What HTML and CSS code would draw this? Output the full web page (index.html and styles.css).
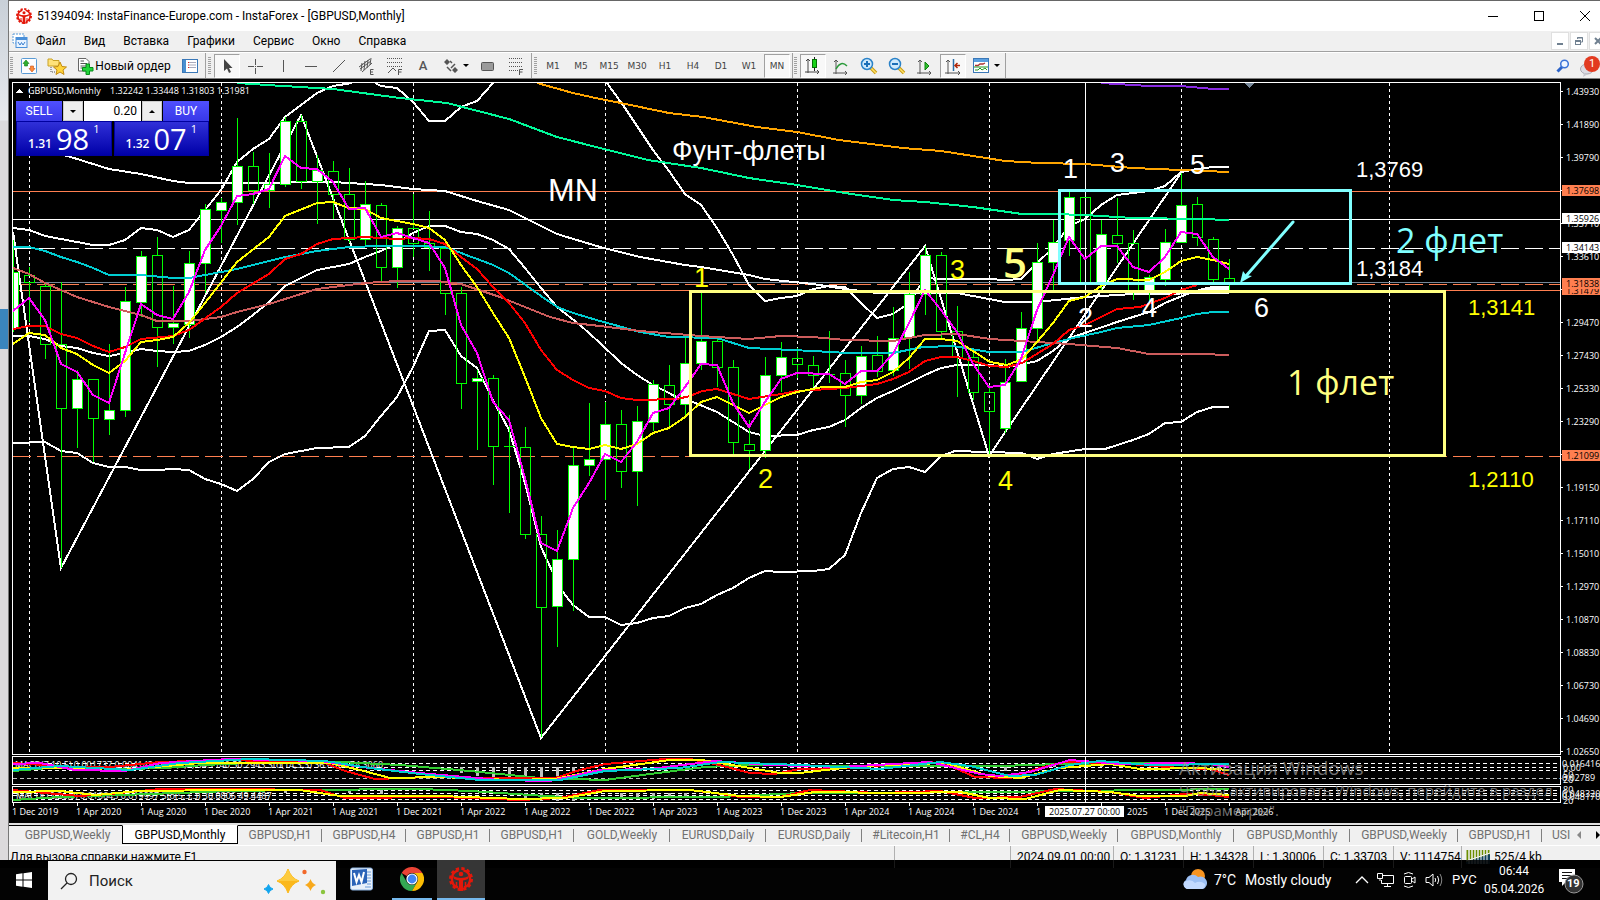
FILE: index.html
```html
<!DOCTYPE html>
<html lang="ru">
<head>
<meta charset="utf-8">
<title>51394094: InstaFinance-Europe.com - InstaForex - [GBPUSD,Monthly]</title>
<link rel="stylesheet" href="styles.css">
</head>
<body>
<svg class="defs" aria-hidden="true">
  <symbol id="insta" viewBox="0 0 24 24">
    <circle cx="12" cy="12" r="10.5" fill="none" stroke="#e3170a" stroke-width="3" stroke-dasharray="3.2 2.3"/>
    <path d="M9.500 3.300A9 9 0 0 0 9 20.500M14.500 3.300A9 9 0 0 1 15 20.500" fill="none" stroke="#e3170a" stroke-width="2.400"/>
    <circle cx="12" cy="7" r="2.300" fill="#e3170a"/>
    <path d="M4 9Q8 11 12 11Q16 11 20 9L19 12Q16 13 14 13.500V24H10V13.500Q8 13 5 12Z" fill="#e3170a"/>
    <path d="M7.500 15V20M16.500 15V20" stroke="#e3170a" stroke-width="1.500"/>
  </symbol>
</svg>
<div class="screen">
  <div class="workspace">
    <div class="behind"><div class="behind-mark"></div></div>
    <main class="window">
      <header class="titlebar">
        <svg class="logo" viewBox="0 0 24 24"><use href="#insta"/></svg>
        <h1>51394094: InstaFinance-Europe.com - InstaForex - [GBPUSD,Monthly]</h1>
        <div class="winbtns">
          <button aria-label="Свернуть"><svg width="12" height="12" viewBox="0 0 12 12"><path d="M1 6.500H11" stroke="#000"/></svg></button>
          <button aria-label="Развернуть"><svg width="12" height="12" viewBox="0 0 12 12"><rect x="1.500" y="1.500" width="9" height="9" fill="none" stroke="#000"/></svg></button>
          <button aria-label="Закрыть"><svg width="12" height="12" viewBox="0 0 12 12"><path d="M1 1L11 11M11 1L1 11" stroke="#000"/></svg></button>
        </div>
      </header>
      <nav class="menubar">
        <svg class="menuicon" width="16" height="16" viewBox="0 0 16 16"><rect x="1" y="1" width="11" height="9" fill="#fff" stroke="#5b9bd8" stroke-dasharray="2 1"/><rect x="4" y="4.500" width="11" height="10" fill="#e8f3ff" stroke="#4a90d9"/><path d="M4 6H15" stroke="#4a90d9" stroke-width="2"/><path d="M6 9L8 12L9.500 9.500L11 12L13 9" fill="none" stroke="#3a7fd0"/></svg>
        <button>Файл</button><button>Вид</button><button>Вставка</button><button>Графики</button><button>Сервис</button><button>Окно</button><button>Справка</button>
        <div class="mdi">
          <button aria-label="Свернуть график"><svg width="10" height="10" viewBox="0 0 10 10"><path d="M2 8H8" stroke="#708090" stroke-width="2"/></svg></button>
          <button aria-label="Восстановить график"><svg width="10" height="10" viewBox="0 0 10 10"><path d="M3.500 3V1.500H8.500V6H7M3 2H9" fill="none" stroke="#708090"/><rect x="1.500" y="4.500" width="5" height="4" fill="none" stroke="#708090"/><path d="M1 5H7" stroke="#708090" stroke-width="2"/></svg></button>
          <button aria-label="Закрыть график"><svg width="10" height="10" viewBox="0 0 10 10"><path d="M2 2L8 8M8 2L2 8" stroke="#708090" stroke-width="2"/></svg></button>
        </div>
      </nav>
      <div class="toolbar">
        <div class="group">
          <span class="grip"></span>
          <button aria-label="Обзор рынка"><svg width="18" height="18" viewBox="0 0 18 18"><rect x="1.500" y="1.500" width="15" height="15" rx="1" fill="#fdfdff" stroke="#5a9bd5"/><path d="M6 3L9 6.500H7.500V9H4.500V6.500H3Z" fill="#2eaf2e" stroke="#137a13" stroke-width=".6"/><path d="M12 15L9 11.500H10.500V9H13.500V11.500H15Z" fill="#ff8c3a" stroke="#c8501a" stroke-width=".6"/></svg></button>
          <button aria-label="Навигатор"><svg width="20" height="18" viewBox="0 0 20 18"><path d="M1 2H5L6 3.500H12V9H1Z" fill="#ffe27a" stroke="#c9a227"/><path d="M4 10V15H8" fill="none" stroke="#555" stroke-dasharray="1 1"/><path d="M13 5L15 9.500L19.500 10L16 13L17 17.500L13 15L9 17.500L10 13L6.500 10L11 9.500Z" fill="#ffd43b" stroke="#c28a10"/></svg></button>
          <button class="wide"><svg width="18" height="18" viewBox="0 0 18 18"><path d="M2.500 1.500H10L13 4.500V14H2.500Z" fill="#fff" stroke="#666"/><path d="M4.500 4H8M4.500 6.500H11M4.500 9H10M4.500 11H8" stroke="#555"/><path d="M10 7H13.500V10.500H17V14H13.500V17.500H10V14H6.500V10.500H10Z" fill="#22d33a" stroke="#078a1a"/></svg>Новый ордер</button>
          <button aria-label="Терминал"><svg width="18" height="18" viewBox="0 0 18 18"><rect x="1.500" y="2.500" width="15" height="13" fill="#fff" stroke="#3a78b8"/><rect x="2" y="3" width="3" height="12" fill="#4a8fd0"/><path d="M8 5.500H15M8 8H15M8 10.500H15" stroke="#aab"/><path d="M7 5.500H8M7 8H8M7 10.500H8" stroke="#d22"/></svg></button>
        </div>
        <div class="group tools">
          <span class="grip"></span>
          <button class="on" aria-label="Курсор"><svg width="18" height="18" viewBox="0 0 18 18"><path d="M6 2V14L9 11.500L11 16L13 15L11 11H14.500Z" fill="#444"/></svg></button>
          <button aria-label="Перекрестие"><svg width="18" height="18" viewBox="0 0 18 18"><path d="M9.500 2V8M9.500 11V17M2 9.500H8M11 9.500H17M9 9.500H10" stroke="#555"/></svg></button>
          <button aria-label="Вертикальная линия"><svg width="18" height="18" viewBox="0 0 18 18"><path d="M9.500 3V15" stroke="#555"/></svg></button>
          <button aria-label="Горизонтальная линия"><svg width="18" height="18" viewBox="0 0 18 18"><path d="M3 9.500H15" stroke="#555"/></svg></button>
          <button aria-label="Трендовая линия"><svg width="18" height="18" viewBox="0 0 18 18"><path d="M3 15L15 3" stroke="#555"/></svg></button>
          <button aria-label="Канал"><svg width="18" height="18" viewBox="0 0 18 18"><path d="M1 10L12 2M4 15L14 6M4 6L3 14M7 4L6 13M10 3L9 11M13 1L12 8M2 12L13 4" fill="none" stroke="#555"/><path d="M15.500 12.500H12.500V17.500H15.500M12.500 15H15" fill="none" stroke="#555"/></svg></button>
          <button aria-label="Фибоначчи"><svg width="18" height="18" viewBox="0 0 18 18"><path d="M1 1.500H17M1 5.500H17M1 9.500H17" stroke="#555" stroke-dasharray="1 1"/><path d="M2 16L7 11L10 14M12.500 18V12.500H16M12.500 15H15.500" fill="none" stroke="#555"/></svg></button>
          <button class="letter" aria-label="Текст">A</button>
          <button class="drop" aria-label="Стрелки"><svg width="16" height="16" viewBox="0 0 16 16"><path d="M1 4L4 1L7 4L4 7ZM9 12L12 9L15 12L12 15Z" fill="#555"/><path d="M7 3L9 5M12 6L8 10M4 9L8 13" stroke="#555" stroke-width="1.500"/></svg><i class="caret"></i></button>
          <button aria-label="Прямоугольник"><svg width="18" height="18" viewBox="0 0 18 18"><rect x="2.500" y="5.500" width="12" height="8" rx="1" fill="#9a9a9a" stroke="#555"/></svg></button>
          <button aria-label="Уровни"><svg width="18" height="18" viewBox="0 0 18 18"><path d="M2 1.500H16M2 5.500H16M2 9.500H16M2 13.500H11" stroke="#555" stroke-dasharray="1 1"/><path d="M12.500 18V12.500H16M12.500 15H15.500" fill="none" stroke="#555"/></svg></button>
        </div>
        <div class="group frames">
          <span class="grip"></span>
          <button>M1</button><button>M5</button><button>M15</button><button>M30</button><button>H1</button><button>H4</button><button>D1</button><button>W1</button><button class="on">MN</button>
        </div>
        <div class="group">
          <span class="grip"></span>
          <button class="on" aria-label="Свечи"><svg width="18" height="18" viewBox="0 0 18 18"><path d="M4 2V16M1 15H15M2 4L4 2L6 4M13 13L15 15L13 17" fill="none" stroke="#444"/><path d="M10.500 0V14" stroke="#222"/><rect x="8.500" y="2.500" width="4" height="8" fill="#19d219" stroke="#067006"/></svg></button>
          <button aria-label="Линия"><svg width="18" height="18" viewBox="0 0 18 18"><path d="M4 3V17M1 16H15M2 5L4 3L6 5M13 14L15 16L13 18" fill="none" stroke="#555"/><path d="M4 12Q9 3 15 9" fill="none" stroke="#2a9a3a" stroke-width="1.500"/></svg></button>
          <button aria-label="Увеличить"><svg width="18" height="18" viewBox="0 0 18 18"><path d="M11 11L16 16" stroke="#c79a10" stroke-width="3.500"/><path d="M11 11L16 16" stroke="#ffe066" stroke-width="1.500"/><circle cx="7" cy="7" r="5.500" fill="#cfe9fb" stroke="#2a82c8" stroke-width="1.500"/><path d="M7 4V10M4 7H10" stroke="#1a6fb8" stroke-width="2"/></svg></button>
          <button aria-label="Уменьшить"><svg width="18" height="18" viewBox="0 0 18 18"><path d="M11 11L16 16" stroke="#c79a10" stroke-width="3.500"/><path d="M11 11L16 16" stroke="#ffe066" stroke-width="1.500"/><circle cx="7" cy="7" r="5.500" fill="#cfe9fb" stroke="#2a82c8" stroke-width="1.500"/><path d="M4 7H10" stroke="#1a6fb8" stroke-width="2"/></svg></button>
          <button aria-label="Автопрокрутка"><svg width="18" height="18" viewBox="0 0 18 18"><path d="M4 3V17M1 16H15M2 5L4 3L6 5M13 14L15 16L13 18" fill="none" stroke="#555"/><path d="M9 5L13 9L9 13Z" fill="#2fc02f" stroke="#0a800a"/></svg></button>
          <button class="on" aria-label="Сдвиг"><svg width="18" height="18" viewBox="0 0 18 18"><path d="M4 3V17M1 16H16M2 5L4 3L6 5M14 14L16 16L14 18" fill="none" stroke="#555"/><path d="M9.500 2V14" stroke="#2a6fa8" stroke-width="1.500"/><path d="M16 8.500H11M13.500 6L11 8.500L13.500 11" fill="none" stroke="#b0280a" stroke-width="1.500"/></svg></button>
          <button class="drop" aria-label="Шаблоны"><svg width="18" height="18" viewBox="0 0 18 18"><rect x="1.500" y="1.500" width="15" height="14" fill="#fff" stroke="#3a78b8"/><rect x="2" y="2" width="14" height="3" fill="#5a9fe0"/><path d="M3 8.500H6L8 7H11L13 6" fill="none" stroke="#a33" stroke-width="1.300"/><path d="M3 13H6L8 11L10 13L13 11L15 13M2 10H16" fill="none" stroke="#292" /></svg><i class="caret"></i></button>
        </div>
        <div class="toolend">
          <button aria-label="Поиск"><svg width="14" height="14" viewBox="0 0 14 14"><path d="M6 8L1.500 12.500" stroke="#2a62c8" stroke-width="3"/><circle cx="8.500" cy="5" r="3.800" fill="#eef5ff" stroke="#3a72d8" stroke-width="1.500"/></svg></button>
          <button class="chat" aria-label="Сообщения"><svg width="20" height="22" viewBox="0 0 20 22"><ellipse cx="7" cy="14" rx="6.500" ry="5" fill="#dcdce4" stroke="#a8a8b0"/><path d="M4 18L3 22L8 19Z" fill="#c8c8d0"/><circle cx="12" cy="9" r="8" fill="#e23a20"/></svg><span class="count">1</span></button>
        </div>
      </div>
      <section class="chart">
        <svg class="plot" viewBox="9 80 1591 743" preserveAspectRatio="xMinYMin meet" role="img" aria-label="GBPUSD,Monthly">
          <g class="crisp">
            <path class="grid" d="M29.500 83V754M221.500 83V754M413.500 83V754M605.500 83V754M797.500 83V754M989.500 83V754M1181.500 83V754M1389.500 83V754"/>
            <path class="white1" d="M13 219.500H1560M1085.500 83V754"/>
            <path class="white1 dash" d="M13 248.500H1560"/>
            <path class="coral" d="M13 191.500H1560M13 290.500H1560"/>
            <path class="coral dash" d="M13 284.500H1560M13 456.500H1560"/>
            <path d="M13 282.500H1560" stroke="#778899"/>
            <g class="line white">
              <path d="M13 228L29 230L45 236L61 239L77 242L93 245H109L125 240L141 228L157 230L173 237L189 230L205 210L221 190L237 162L253 149L269 139L285 117L301 105L317 93L333 86L352 83M375 83L381 86L397 88L413 102L429 121H445L461 107L477 101L493 83M607 83L623 105L653 150L669 171L685 194L701 205L717 228L733 255L749 285L765 301L781 298L797 296L813 289L829 286L845 287L861 303L877 318L893 314L909 303L925 278L941 279H989L1005 280L1021 279L1037 263L1053 248L1069 226L1085 219L1101 205L1117 195L1133 193L1149 191L1165 186L1181 172L1197 169L1213 167H1229"/>
              <path d="M13 336H29L45 339L61 346L77 348L93 353L109 356L125 353L141 349L157 351L173 352L189 351L205 345L221 337L237 327L253 315L269 302L285 286L301 278L317 270L333 267L349 264L365 257L381 251L397 243L413 233L429 226H445L461 232L477 234L493 240L509 249L525 268L541 288L557 307L580 325L600 343L621 363L637 375L653 385L669 393L678 398L693 402L717 412L733 422L749 432L765 436L797 435L813 430L829 427L845 420L861 408L877 398L893 391L909 383L925 375L941 368L957 365H989L1007 367L1023 364L1037 361L1053 351L1069 338L1085 333L1117 322L1149 312L1165 303L1187 294L1203 289L1213 287H1229M1205 289H1229"/>
              <path d="M13 443L45 442L61 451L77 453L93 463L109 467H125L141 470H157L173 469L189 470L205 479L221 484L237 491L253 479L269 462L285 454L317 448L349 447L365 436L381 416L397 397L413 367L429 331L445 330L461 356L477 368L493 400L509 430L525 483L541 547L553 573L563 592L573 605L589 617H605L621 625L637 623L653 618L669 616L685 608L701 604L717 595L733 588L749 578L765 571L781 572L813 571L829 569L845 555L861 513L877 478L893 469L909 467L925 472L941 456L955 451L987 452L1022 453L1037 459L1053 454L1085 449H1105L1133 440L1149 434L1165 423L1181 422L1197 412L1213 407H1229"/>
              <path d="M60 154L74 158L109 169L141 174L173 181L189 183H269L301 182H333L381 185L413 189L445 191L477 201L509 210L557 234L600 247L640 257L685 265L701 267L749 275L765 279L813 284L845 289L877 293H957L1005 302H1037L1085 297L1133 294L1229 293"/>
            </g>
            <path class="zigzag" d="M13 232L61 568L301 115L541 738L925 246L989 456L1181 173"/>
            <path class="candle" d="M13.500 240V332M29.500 267V275M29.500 282V322M45.500 284V286M45.500 344V359M61.500 282V344M61.500 408V568M77.500 370V448M93.500 418V462M109.500 344V435M125.500 287V417M141.500 251V317M157.500 237V255M157.500 327V367M173.500 286V344M189.500 251V338M205.500 204V293M221.500 198V243M237.500 118V225M253.500 152V166M253.500 190V204M269.500 153V208M285.500 117V187M301.500 115V121M301.500 181V189M317.500 155V224M333.500 161V171M333.500 194V219M349.500 168V194M349.500 239V243M365.500 181V247M381.500 203V205M381.500 267V282M397.500 226V288M413.500 194V228M413.500 243V257M429.500 211V243M429.500 247V271M445.500 293V315M461.500 287V293M461.500 383V409M477.500 370V450M493.500 375V378M493.500 446V485M509.500 415V513M504 446.500H515M525.500 427V447M525.500 534V539M541.500 516V534M541.500 607V737M557.500 530V647M573.500 448V611M589.500 403V476M605.500 402V500M621.500 410V424M621.500 471V488M637.500 406V506M653.500 380V431M669.500 365V385M669.500 404V426M685.500 338V415M701.500 293V370M717.500 337V341M717.500 367V387M733.500 360V367M733.500 442V455M749.500 420V444M749.500 450V469M765.500 357V458M781.500 342V392M797.500 348V358M797.500 364V378M813.500 356V365M813.500 375V387M829.500 331V383M824 374.500H835M845.500 360V373M845.500 395V427M861.500 346V404M877.500 336V355M877.500 371V377M893.500 307V376M909.500 272V369M925.500 246V315M941.500 252V255M941.500 331V338M957.500 306V331M957.500 357V397M973.500 348V357M973.500 392V400M989.500 385V392M989.500 411V456M1005.500 359V433M1021.500 312V381M1037.500 243V343M1053.500 220V290M1069.500 192V256M1101.500 220V292M1117.500 198V235M1117.500 243V263M1133.500 230V243M1133.500 290V300M1149.500 275V302M1165.500 229V286M1181.500 173V242M1197.500 197V204M1197.500 237V246M1213.500 237V239M1213.500 279V283M1229.500 259V278M1229.500 283V290"/>
            <path class="candle" d="M24.500 275.500h10v7h-10zM40.500 286.500h10v58h-10zM56.500 344.500h10v64h-10zM88.500 379.500h10v39h-10zM152.500 255.500h10v72h-10zM248.500 166.500h10v24h-10zM296.500 121.500h10v60h-10zM328.500 171.500h10v23h-10zM344.500 194.500h10v45h-10zM376.500 205.500h10v62h-10zM408.500 228.500h10v15h-10zM424.500 243.500h10v4h-10zM440.500 248.500h10v45h-10zM456.500 293.500h10v90h-10zM488.500 378.500h10v68h-10zM520.500 447.500h10v87h-10zM536.500 534.500h10v73h-10zM616.500 424.500h10v47h-10zM664.500 385.500h10v19h-10zM712.500 341.500h10v26h-10zM728.500 367.500h10v75h-10zM744.500 444.500h10v6h-10zM792.500 358.500h10v6h-10zM808.500 365.500h10v10h-10zM840.500 373.500h10v22h-10zM872.500 355.500h10v16h-10zM936.500 255.500h10v76h-10zM952.500 331.500h10v26h-10zM968.500 357.500h10v35h-10zM984.500 392.500h10v19h-10zM1080.500 197.500h10v85h-10zM1112.500 235.500h10v8h-10zM1128.500 243.500h10v47h-10zM1192.500 204.500h10v33h-10zM1208.500 239.500h10v40h-10zM1224.500 278.500h10v5h-10z"/>
            <path class="candle up" d="M13.500 272.500h5v56h-5zM72.500 379.500h10v29h-10zM104.500 410.500h10v9h-10zM120.500 301.500h10v109h-10zM136.500 256.500h10v46h-10zM168.500 323.500h10v4h-10zM184.500 263.500h10v61h-10zM200.500 209.500h10v54h-10zM216.500 202.500h10v8h-10zM232.500 166.500h10v36h-10zM264.500 184.500h10v6h-10zM280.500 121.500h10v63h-10zM312.500 170.500h10v11h-10zM360.500 204.500h10v35h-10zM392.500 228.500h10v39h-10zM472.500 378.500h10v3h-10zM552.500 559.500h10v47h-10zM568.500 465.500h10v94h-10zM584.500 459.500h10v6h-10zM600.500 424.500h10v35h-10zM632.500 421.500h10v50h-10zM648.500 384.500h10v38h-10zM680.500 363.500h10v41h-10zM696.500 341.500h10v22h-10zM760.500 375.500h10v75h-10zM776.500 357.500h10v18h-10zM856.500 356.500h10v39h-10zM888.500 338.500h10v32h-10zM904.500 294.500h10v43h-10zM920.500 255.500h10v39h-10zM1000.500 382.500h10v46h-10zM1016.500 328.500h10v53h-10zM1032.500 262.500h10v66h-10zM1048.500 242.500h10v20h-10zM1064.500 197.500h10v43h-10zM1096.500 234.500h10v48h-10zM1144.500 277.500h10v13h-10zM1160.500 242.500h10v37h-10zM1176.500 205.500h10v37h-10z"/>
            <g class="line">
              <path stroke="#ffa500" d="M537 83L573 93L600 99L616 102L669 113L703 117L757 127L797 132L839 140L903 148L941 151L1005 161L1040 163L1085 164L1133 168L1181 170L1229 172"/>
              <path stroke="#00fa9a" d="M237 83L267 85L333 89L400 98L447 103L509 119L557 137L600 148L648 160L701 168L749 178L797 185L845 193L893 200L925 202L973 207L1022 214H1053L1085 215L1133 218L1200 219L1229 220"/>
              <path stroke="#8a2be2" d="M1101 83L1117 84L1149 86H1181L1213 89H1229"/>
              <path stroke="#00ced1" d="M13 247H29L45 251L61 257L77 262L93 268L109 275H141L173 278H189L205 275L237 269L269 261L285 257L317 251L349 247L381 246H413L445 247L461 253L477 259L493 265L509 273L541 296L557 307L573 313L600 321L640 332L669 337L717 338L749 348L813 351L847 353H893L923 347L953 346L989 352H1022L1053 343L1073 338L1101 332L1117 328L1149 325L1181 318L1197 314L1213 312H1229"/>
              <path stroke="#cd5c5c" d="M13 268L29 274L45 283L77 297L109 307L141 315L157 321H189L221 317L237 312L269 304L317 289L365 283L397 281H437L461 284L500 297L550 317L573 323L600 326L640 331L701 336L749 339L781 336L813 337L845 340L893 341L925 335L957 334L990 339L1053 343L1069 344L1117 348L1149 354H1200L1229 355"/>
              <path stroke="#f00" d="M13 329L29 326H45L61 334L77 338L93 346L109 352L125 347L141 339L173 336L189 330L221 307L237 293L269 274L285 259L301 254L317 244L333 239L365 237L397 239L413 238L429 239L445 244L461 257L477 269L493 287L509 303L525 323L541 350L557 370L573 380L589 388L605 391L621 398L637 400L677 399L690 396L702 391L717 389L749 399L781 394L797 391L845 388L877 384L893 379L909 372L925 361L941 357H957L973 361L990 366L1007 367L1022 363L1053 344L1069 330L1085 325L1101 317L1117 309L1140 307L1165 298L1181 290L1197 285"/>
              <path stroke="#ff0" d="M13 344L29 333L45 335L61 348L77 354L93 365L109 373L125 361L141 342L157 340L173 337L189 323L205 303L237 262L269 237L285 216L317 203L333 202L349 208L365 209L381 218L413 224L429 228L445 240L461 265L477 287L493 313L509 338L525 377L541 418L557 444L573 447L589 449L605 445L621 449L637 444L653 433L669 428L685 417L701 402L717 397L749 413L781 397L797 392L823 387H845L861 382L877 380L893 372L909 358L925 339H941L957 341L973 351L990 362L1007 365L1022 359L1037 342L1053 323L1069 301L1085 297L1101 286L1117 279L1149 280L1165 272L1181 261L1197 257L1213 260L1229 264"/>
              <path stroke="#f0f" d="M13 311L29 298L45 320L61 364L77 372L93 395L109 403L125 353L141 304L157 315L173 319L189 292L205 250L221 226L237 196L253 194L269 189L285 156L301 168L317 169L333 182L349 209L365 208L381 237L397 233L413 238L429 243L445 268L461 325L477 353L493 402L509 420L525 478L541 543L557 551L573 508L589 483L605 454L621 462L637 442L653 413L669 408L685 387L701 364L717 365L733 403L749 427L765 402L781 379L797 373L829 374L845 384L861 371H877L893 354L909 323L925 290L941 310L957 332L973 364L989 387L1005 385L1021 359L1037 310L1053 275L1069 237L1085 259L1101 246H1117L1133 267L1149 272L1165 257L1181 232L1197 234L1213 257L1229 269"/>
            </g>
            <path class="white1" stroke-dasharray="4 3" d="M13 763.500H1560M13 767.500H1560M13 770.500H1560M13 790.500H1560M13 793.500H1560M13 795.500H1560M13 799.500H1560"/>
            <path stroke="#c0c0c0" stroke-dasharray="4 3" d="M13 778.500H1560"/>
            <path stroke="#c0c0c0" stroke-width="3" d="M461 767V773M477 767V776M493 767V777M509 767V778M525 767V778M541 767V777M557 767V776M573 767V773M285 789V793M349 789V793M381 790V794M525 793V800M541 793V801M557 793V801M573 793V801M621 793V798M637 793V799M653 793V799M669 793V798M685 793V797M1005 767V771M1054 763V767M1101 762V767"/>
          </g>
          <g class="small">
            <text x="15" y="768">MACD(7,10,5) 0.001737 0.004142    Sto(8,3,3) 34.1140 50.2943    Sto(14,3,3) 36.6327 74.3060</text>
            <text x="16" y="799">MACD(12,26,9) 0.016643 0.019997  Sto(5,3,3) 30.0806 49.4487</text>
          </g>
          <g class="line crisp">
            <path stroke="#32cd32" d="M13 771L61 767L125 769L165 768L205 765L269 762H340L400 765L470 771L540 778L605 780L650 774L705 767L750 765L860 766H1000L1060 764L1140 763L1229 764"/>
            <path stroke="#f00" d="M13 763L45 765L75 767H110L160 762L230 760L325 763L345 771L375 779L430 777L500 778H555L580 770L605 764L665 759H690L715 764L750 773L774 774L800 769H830L930 762L950 766L975 777L1010 778L1040 768L1065 762L1130 764L1180 768L1210 769L1229 775"/>
            <path stroke="#ff0" d="M13 768L60 768L110 771L200 763H330L360 770L390 778L440 777L510 780L555 779L605 769L670 760H702L750 768L780 773H800L860 766L945 763L990 776L1020 778L1060 768L1110 764L1140 769L1200 768L1229 770"/>
            <path stroke="#f0f" d="M13 764L40 763L75 770L125 771L160 763L230 759L320 761L370 768L430 774L500 780L550 781L600 770L650 769L715 761L770 765L840 767L930 762L980 774L1000 776L1030 772L1070 760L1120 764L1180 763L1210 764L1229 767"/>
            <path stroke="#00ced1" d="M13 770L60 766L130 770L180 763L250 759L325 761L370 768L420 774L480 780H560L605 771L680 768L720 762L800 765L880 769L940 762L970 766L1010 776L1035 775L1070 765L1100 761L1150 765L1229 764"/>
            <path stroke="#32cd32" d="M13 800L60 797L150 794L230 791L300 790L420 789L470 791L530 795L580 798L720 797L800 793L1000 792L1229 789"/>
            <path stroke="#f00" d="M13 790L45 793L80 796L110 794L160 789H230L320 790L345 798L440 797L520 800L560 798L600 790H690L715 793L740 797H780L810 790L880 793L940 791L975 798L1020 797L1055 789L1110 792L1145 798L1185 794L1210 795L1229 797"/>
            <path stroke="#ff0" d="M13 792L60 791L95 795L140 791L230 790L300 790L340 796L440 796L520 799L565 798L605 791L690 790L740 796L780 797L815 792L900 793L960 792L990 798L1025 799L1060 790L1110 792L1140 796L1185 796L1200 793L1229 795"/>
          </g>
          <g class="crisp">
            <path class="white1" d="M12.500 82.500H1560.500V754.500H12.500ZM12.500 756.500H1560.500V784.500H12.500ZM12.500 786.500H1560.500V802.500H12.500Z"/>
            <path class="white1" d="M1561 91.500h2M1561 124.500h2M1561 157.500h2M1561 190.500h2M1561 223.500h2M1561 256.500h2M1561 289.500h2M1561 322.500h2M1561 355.500h2M1561 388.500h2M1561 421.500h2M1561 454.500h2M1561 487.500h2M1561 520.500h2M1561 553.500h2M1561 586.500h2M1561 619.500h2M1561 652.500h2M1561 685.500h2M1561 718.500h2M1561 751.500h2"/>
            <path class="white1" d="M13.500 803v3M77.500 803v3M141.500 803v3M205.500 803v3M269.500 803v3M333.500 803v3M397.500 803v3M461.500 803v3M525.500 803v3M589.500 803v3M653.500 803v3M717.500 803v3M781.500 803v3M845.500 803v3M909.500 803v3M973.500 803v3M1037.500 803v3M1101.500 803v3M1165.500 803v3M1229.500 803v3M1085.500 756V802"/>
            <path fill="#778899" d="M1244 83h10l-5 5z"/>
            <path fill="#fff" d="M16 93h7l-3.500-4z"/>
          </g>
          <g class="digits">
            <text x="672" y="160">Фунт-флеты</text>
            <text class="mn" x="548" y="201">MN</text>
            <text x="1063" y="178">1</text><text x="1110" y="172">3</text><text x="1190" y="174">5</text>
            <text x="1078" y="327">2</text><text x="1142" y="317">4</text><text x="1254" y="317">6</text>
            <g fill="#ff0"><text x="694" y="287">1</text><text x="758" y="488">2</text><text x="950" y="279">3</text><text x="998" y="490">4</text></g>
          </g>
          <g class="levels">
            <text x="1356" y="177">1,3769</text><text x="1356" y="276">1,3184</text>
            <g fill="#ff0"><text x="1468" y="315">1,3141</text><text x="1468" y="487">1,2110</text></g>
          </g>
          <rect class="zone" x="690.500" y="291.500" width="754" height="164" stroke="#ffff80"/>
          <rect class="zone" x="1059.500" y="190.500" width="291" height="93" stroke="#80ffff"/>
          <path d="M1293 222L1246 276" stroke="#80ffff" stroke-width="3" stroke-linecap="round"/>
          <path d="M1240 283L1243 271L1246 275L1252 276Z" fill="#80ffff"/>
          <g class="notes">
            <text class="five" x="1003" y="278">5</text>
            <text x="1396" y="253" fill="#80ffff">2 флет</text>
            <text x="1287" y="395">1 флет</text>
          </g>
          <g class="axis">
            <text x="1566" y="95">1.43930</text><text x="1566" y="128">1.41890</text><text x="1566" y="161">1.39790</text><text x="1566" y="227">1.35710</text><text x="1566" y="260">1.33610</text><text x="1566" y="326">1.29470</text><text x="1566" y="359">1.27430</text><text x="1566" y="392">1.25330</text><text x="1566" y="425">1.23290</text><text x="1566" y="491">1.19150</text><text x="1566" y="524">1.17110</text><text x="1566" y="557">1.15010</text><text x="1566" y="590">1.12970</text><text x="1566" y="623">1.10870</text><text x="1566" y="656">1.08830</text><text x="1566" y="689">1.06730</text><text x="1566" y="722">1.04690</text><text x="1566" y="755">1.02650</text>
            <text x="1562" y="767">0.016416</text><text x="1563" y="771">0.00</text><text x="1563" y="778">50</text><text x="1559" y="781">-0.02789</text><text x="1563" y="783">20</text>
            <text x="1563" y="793">80</text><text x="1562" y="797">0.048320</text><text x="1562" y="800">0.048170</text><text x="1563" y="804">20</text>
          </g>
          <path fill="#ff7f50" d="M1562 185h38v11h-38zM1562 284h38v11h-38zM1562 450h38v11h-38z"/>
          <path fill="#fff" d="M1562 213h38v11h-38zM1562 242h38v11h-38zM1045 806h79v11h-79z"/>
          <g class="axis dark"><text x="1566" y="294">1.31479</text></g>
          <path fill="#ff7f50" d="M1562 278h38v11h-38z"/>
          <g class="axis">
            <text x="12" y="815">1 Dec 2019</text><text x="76" y="815">1 Apr 2020</text><text x="140" y="815">1 Aug 2020</text><text x="204" y="815">1 Dec 2020</text><text x="268" y="815">1 Apr 2021</text><text x="332" y="815">1 Aug 2021</text><text x="396" y="815">1 Dec 2021</text><text x="460" y="815">1 Apr 2022</text><text x="524" y="815">1 Aug 2022</text><text x="588" y="815">1 Dec 2022</text><text x="652" y="815">1 Apr 2023</text><text x="716" y="815">1 Aug 2023</text><text x="780" y="815">1 Dec 2023</text><text x="844" y="815">1 Apr 2024</text><text x="908" y="815">1 Aug 2024</text><text x="972" y="815">1 Dec 2024</text><text x="1036" y="815">1</text><text x="1127" y="815">2025</text><text x="1164" y="815">1 Dec 2025</text><text x="1228" y="815">1 Apr 2026</text>
          </g>
          <g class="axis dark"><text x="1566" y="194">1.37698</text><text x="1566" y="222">1.35926</text><text x="1566" y="251">1.34143</text><text x="1566" y="287">1.31838</text><text x="1566" y="459">1.21099</text><text x="1049" y="815">2025.07.27 00:00</text></g>
          <g class="small">
            <text x="28" y="94">GBPUSD,Monthly</text><text x="110" y="94">1.32242 1.33448 1.31803 1.31981</text>
          </g>
          <g class="watermark">
            <text class="big" x="1179" y="775">Активация Windows</text>
            <text x="1179" y="796">Чтобы активировать Windows, перейдите в раздел</text>
            <text x="1179" y="816">"Параметры".</text>
          </g>
        </svg>
        <form class="oneclick">
          <div class="orders">
            <button type="button" class="side">SELL</button>
            <button type="button" class="step" aria-label="Меньше"><i class="caret"></i></button>
            <input type="text" value="0.20" aria-label="Объём">
            <button type="button" class="step" aria-label="Больше"><i class="caret flip"></i></button>
            <button type="button" class="side">BUY</button>
          </div>
          <div class="prices">
            <div class="price"><span>1.31</span><b>98</b><sup>1</sup></div>
            <div class="price"><span>1.32</span><b>07</b><sup>1</sup></div>
          </div>
        </form>
      </section>
      <nav class="tabs">
        <button class="first">GBPUSD,Weekly</button><button class="monthly active">GBPUSD,Monthly</button><button class="h1">GBPUSD,H1</button><button class="h1">GBPUSD,H4</button><button class="h1">GBPUSD,H1</button><button class="h1">GBPUSD,H1</button><button class="daily">GOLD,Weekly</button><button class="daily">EURUSD,Daily</button><button class="daily">EURUSD,Daily</button><button class="lite">#Litecoin,H1</button><button class="cl">#CL,H4</button><button class="weekly">GBPUSD,Weekly</button><button class="monthly">GBPUSD,Monthly</button><button class="monthly">GBPUSD,Monthly</button><button class="weekly">GBPUSD,Weekly</button><button class="h1">GBPUSD,H1</button><button class="cut">USI</button>
        <span class="scroll"><i class="arrow left"></i><i class="arrow"></i></span>
      </nav>
      <footer class="status">
        <span class="help">Для вызова справки нажмите F1</span>
        <span class="c-blank"></span><span class="c-date">2024.09.01 00:00</span><span class="c-val">O: 1.31231</span><span class="c-val">H: 1.34328</span><span class="c-val">L: 1.30006</span><span class="c-val">C: 1.33703</span><span class="c-vol">V: 1114754</span>
        <span class="c-net"><svg width="24" height="14" viewBox="0 0 24 14"><path d="M1.500 0V13M4.500 0V13M7.500 0V13M10.500 0V13M13.500 0V13M16.500 0V13M19.500 0V13M22.500 0V13" stroke="#6b8e00" stroke-width="2"/><path d="M0 14V12L24 4V14Z" fill="#12425e"/><path d="M0 11L24 3" stroke="#f0f0f0"/><path d="M3 0V14M6 0V14M9 0V14M12 0V14M15 0V14M18 0V14M21 0V14" stroke="#f0f0f0"/></svg>525/4 kb</span>
      </footer>
    </main>
  </div>
  <div class="taskbar">
    <button class="start" aria-label="Пуск"><svg width="16" height="16" viewBox="0 0 16 16"><path d="M0 2.200L6.500 1.300V7.500H0ZM7.500 1.200L16 0V7.500H7.500ZM0 8.500H6.500V14.700L0 13.800ZM7.500 8.500H16V16L7.500 14.800Z" fill="#fff"/></svg></button>
    <label class="search">
      <svg width="18" height="18" viewBox="0 0 18 18"><circle cx="11" cy="7" r="5.500" fill="none" stroke="#222" stroke-width="1.300"/><path d="M7 11L1 17" stroke="#222" stroke-width="1.300"/></svg>
      <input type="text" placeholder="Поиск">
      <svg width="64" height="28" viewBox="0 0 64 28"><path d="M26 2Q29 11 37 14Q29 17 26 26Q23 17 15 14Q23 11 26 2Z" fill="#fbb81c" stroke="#fbb81c"/><path d="M26 2Q29 11 37 14L15 14Q23 11 26 2Z" fill="#fdcb3f"/><path d="M6.500 17.500Q7.500 21 11 22Q7.500 23 6.500 26.500Q5.500 23 2 22Q5.500 21 6.500 17.500Z" fill="#12a5ee" stroke="#12a5ee"/><path d="M48.500 12Q50 16.500 54 18Q50 19.500 48.500 24Q47 19.500 43 18Q47 16.500 48.500 12Z" fill="#f8a91c"/><circle cx="42.500" cy="5" r="2.200" fill="#f2682a"/><circle cx="61" cy="25" r="2.200" fill="#8bc53f"/></svg>
    </label>
    <button class="app word" aria-label="Word"><svg width="24" height="24" viewBox="0 0 24 24"><rect x=".500" y="1" width="22" height="22" rx="2" fill="#e8f0fa" stroke="#8ab0de"/><path d="M16 5H21M17 8H21M17 11H21M17 14H21M17 17H21M15 20H21" stroke="#6a9ad8"/><path d="M2 3L17 2V16L2 19Z" fill="#2a63b8"/><path d="M4 6L6.500 15L9 8L11.500 15L14 5" fill="none" stroke="#fff" stroke-width="2"/></svg></button>
    <button class="app run" aria-label="Chrome"><svg width="24" height="24" viewBox="0 0 24 24"><path d="M1.600 6A12 12 0 0 1 22.400 6H12A6 6 0 0 0 6.800 9Z" fill="#ea4335"/><path d="M1.600 6A12 12 0 0 0 12 24L17.200 15A6 6 0 0 1 6.800 15Z" fill="#34a853"/><path d="M22.400 6A12 12 0 0 1 12 24L17.200 15A6 6 0 0 0 12 6Z" fill="#fbbc04"/><circle cx="12" cy="12" r="5.600" fill="#fff"/><circle cx="12" cy="12" r="4.400" fill="#4285f4"/></svg></button>
    <button class="app current" aria-label="InstaForex"><svg width="24" height="24" viewBox="0 0 24 24"><use href="#insta"/></svg></button>
    <div class="tray">
      <svg class="weather" width="26" height="24" viewBox="0 0 26 24"><circle cx="17" cy="8" r="7" fill="#f79420"/><path d="M6 21A5 5 0 0 1 5 12A7 7 0 0 1 17 9A6 6 0 0 1 22 21Z" fill="#9dc0f4"/><path d="M6 21A5 5 0 0 1 3 14Q10 10 14 15Q19 12 24 16A5 5 0 0 1 21 21Z" fill="#c3daff"/></svg>
      <span class="temp">7°C</span><span class="sky">Mostly cloudy</span>
      <svg class="chev" width="14" height="10" viewBox="0 0 14 10"><path d="M1 8L7 2L13 8" fill="none" stroke="#fff" stroke-width="1.300"/></svg>
      <svg class="net" width="18" height="16" viewBox="0 0 18 16"><path d="M6 3.500H16.500V11.500H4.500V8M7 14.500H14M10.500 12V14M.500 1.500H5.500V6.500H.500ZM3 6.500V9" fill="none" stroke="#fff"/></svg>
      <svg class="cam" width="16" height="16" viewBox="0 0 16 16"><rect x="3.500" y="4.500" width="7" height="7" rx="1" fill="none" stroke="#fff"/><path d="M11 7L14 5V11L11 9M3 2Q7.500 -1 12 2M3 14Q7.500 17 12 14" fill="none" stroke="#fff"/></svg>
      <svg class="vol" width="18" height="16" viewBox="0 0 18 16"><path d="M1 5.500H4L8 2V14L4 10.500H1ZM10 6Q11.500 8 10 10M12.500 4Q15 8 12.500 12" fill="none" stroke="#fff"/><path d="M15 2Q18.500 8 15 14" fill="none" stroke="#888"/></svg>
      <span class="lang">РУС</span>
      <span class="clock"><time>06:44</time><time>05.04.2026</time></span>
      <span class="notif"><svg width="28" height="28" viewBox="0 0 28 28"><path d="M0 2H16V15H7L3 19V15H0Z" fill="#fff"/><path d="M3 5.500H13M3 8.500H13M3 11.500H10" stroke="#111"/><circle cx="15" cy="17" r="9" fill="#333" stroke="#999"/></svg><b>19</b></span>
    </div>
  </div>
</div>
</body>
</html>
```
FILE: styles.css
```css
* { box-sizing: border-box; }
body {
  margin: 0;
  background: #000;
  font-family: Roboto, "Open Sans", sans-serif;
  font-size: 12px;
  line-height: 16px;
  color: #000;
}
button { margin: 0; padding: 0; border: 0; background: none; font: inherit; color: inherit; white-space: nowrap; }
svg { display: block; flex: none; }
.defs { position: absolute; width: 0; height: 0; }
.screen { display: flex; flex-direction: column; height: 100vh; overflow: hidden; }
.workspace { flex: 1; min-height: 0; display: grid; grid-template-columns: 8px minmax(0, 1fr); }
.behind { background: linear-gradient(#c9d0d8, #e8eaee 120px, #dcdadc 121px); display: flex; flex-direction: column; }
.behind-mark { margin-top: 309px; height: 40px; background: #3a85bd; }
.window { display: flex; flex-direction: column; min-height: 0; min-width: 0; border-top: 1px solid #666; border-left: 1px solid #777; background: #f0f0f0; }

.titlebar { height: 30px; background: #fff; display: flex; align-items: center; padding-left: 7px; }
.logo { width: 16px; height: 16px; margin-right: 5px; }
.titlebar h1 { margin: 0; font-size: 12px; font-weight: 400; flex: 1; }
.winbtns { display: flex; margin-right: -8px; }
.winbtns button { width: 46px; height: 30px; display: grid; place-items: center; }

.menubar { height: 21px; display: flex; align-items: center; border-bottom: 1px solid #a0a0a0; padding-left: 3px; }
.menuicon { margin-right: -1px; }
.menubar > button { padding: 0 9px; height: 20px; }
.mdi { margin-left: auto; margin-right: -7px; display: flex; gap: 1px; }
.mdi button { width: 18px; height: 18px; background: #fff; border: 1px solid #e0e0e0; display: grid; place-items: center; }

.toolbar { height: 26px; display: flex; align-items: center; border-top: 1px solid #fff; }
.group { display: flex; align-items: center; height: 26px; padding-right: 1px; border-right: 1px solid #a0a0a0; }
.grip { width: 3px; height: 18px; margin: 0 2px 0 1px; background: repeating-linear-gradient(#a0a0a0 0 1px, #f0f0f0 1px 2px); }
.group button { width: 28px; height: 24px; display: flex; align-items: center; justify-content: center; }
.group .wide { width: 105px; gap: 1px; font-size: 12px; }
.tools, .frames { padding-left: 1px; }
.group .drop { width: 37px; gap: 4px; }
.group .on { width: 26px; margin: 0 1px; border: 1px solid; border-color: #a0a0a0 #fff #fff #a0a0a0; background: #f8f8f8; }
.letter { font-size: 13px; font-weight: 500; color: #555; }
.frames button { font-family: "DejaVu Sans", sans-serif; font-size: 9px; color: #444; }
.caret { width: 0; height: 0; border: 3px solid transparent; border-top: 3px solid #000; border-bottom: 0; }
.flip { transform: rotate(180deg); }
.toolend { margin-left: auto; display: flex; align-items: center; gap: 10px; }
.chat { position: relative; }
.count { position: absolute; left: 9px; top: 1px; color: #fff; font-size: 11px; }

.chart { flex: 1; min-height: 0; position: relative; background: #000; border-top: 1px solid #808080; padding-top: 1px; }
.plot { width: 100%; height: 100%; }
.crisp { shape-rendering: crispEdges; }
.grid { stroke: #fff; stroke-dasharray: 3 3; }
.white1 { stroke: #fff; fill: none; }
.coral { stroke: #ff7f50; }
.dash { stroke-dasharray: 18 6; }
.line { fill: none; stroke-width: 2; }
.white { stroke: #fff; }
.zigzag { fill: none; stroke: #fff; stroke-width: 2; }
.candle { fill: none; stroke: #0f0; }
.up { fill: #fff; }
.zone { fill: none; stroke-width: 3; }
.digits { font: 27px "Liberation Sans", sans-serif; fill: #fff; }
.mn { font-size: 32px; }
.levels { font: 22px "Liberation Sans", sans-serif; fill: #fff; }
.notes { font: 34px "Open Sans", sans-serif; fill: #ffff80; }
.five { font-size: 42px; font-weight: 600; }
.axis { font: 9px "Open Sans", sans-serif; fill: #fff; }
.dark { fill: #000; }
.small { font: 9px "Open Sans", sans-serif; fill: #fff; white-space: pre; }
.watermark { font: 15px "Open Sans", sans-serif; fill: rgba(150, 150, 150, .75); }
.big { font-size: 19px; }

.oneclick { position: absolute; left: 7px; top: 22px; width: 193px; }
.orders { display: grid; grid-template-columns: 46px 20px 57px 20px 46px; gap: 1px; }
.prices { display: grid; grid-template-columns: 1fr 1fr; gap: 2px; }
.orders > * { height: 20px; }
.side { background: linear-gradient(#5050ff, #3838e8); color: #fff; }
.step { background: #eee; display: grid; place-items: center; border: 1px solid #ccc; }
.orders input { width: 100%; min-width: 0; border: 0; padding: 0 4px; text-align: right; font: inherit; }
.price { height: 35px; display: flex; align-items: flex-end; justify-content: center; gap: 4px; padding-bottom: 3px; color: #fff; background: linear-gradient(#3030d8, #0000a8); border: 1px solid #0000a0; font-family: "Open Sans", sans-serif; }
.price span { font-size: 12px; font-weight: 600; }
.price b { font-size: 29px; line-height: 26px; font-weight: 400; }
.price sup { font-size: 11px; align-self: flex-start; line-height: 14px; }

.tabs { height: 23px; display: flex; border-top: 2px solid #e0e0e0; box-shadow: inset 0 1px 0 #000; border-bottom: 1px solid #fff; color: #707070; overflow: hidden; }
.tabs button { flex: none; height: 20px; background: linear-gradient(#808080, #808080) right 4px / 1px 13px no-repeat; }
.tabs .first { width: 113px; background: none; padding-left: 4px; }
.tabs .monthly { width: 116px; }
.tabs .weekly { width: 108px; }
.tabs .daily { width: 96px; }
.tabs .lite { width: 88px; }
.tabs .h1 { width: 84px; }
.tabs .cl { width: 60px; }
.tabs .cut { width: 28px; background: none; padding-left: 10px; overflow: hidden; text-align: left; }
.tabs .active { background: #fff; color: #000; border: 1px solid #000; border-top-color: #fff; height: 19px; }
.scroll { margin-left: auto; display: flex; align-items: center; gap: 15px; }
.arrow { border: 4px solid transparent; border-left-color: #000; border-right: 0; }
.left { transform: rotate(180deg); border-left-color: #888; }

.status { height: 14px; display: flex; line-height: 22px; white-space: nowrap; }
.status span { flex: none; height: 22px; padding-left: 6px; border-left: 1px solid #b0b0b0; }
.status .help { flex: 1; padding-left: 1px; border: 0; }
.c-blank { width: 116px; }
.c-date { width: 103px; }
.c-val { width: 70px; }
.c-vol { width: 68px; }
.status .c-net { width: 139px; display: flex; align-items: center; gap: 4px; padding-left: 4px; }

.taskbar { position: relative; height: 40px; display: flex; align-items: stretch; color: #fff; background: linear-gradient(rgba(0, 0, 0, .86) 8px, #030303 8px); }
.start { width: 48px; display: grid; place-items: center; }
.search { width: 288px; margin-top: 1px; background: #f2f2f2; display: flex; align-items: center; padding: 0 10px 0 12px; }
.search input { flex: 1; min-width: 0; border: 0; background: none; font: inherit; font-size: 15px; padding: 0 0 0 11px; }
.search input::placeholder { color: #222; opacity: 1; }
.app { width: 48px; display: grid; place-items: center; border-bottom: 2px solid transparent; }
.word { margin-left: 2px; }
.run { width: 40px; margin: 0 5px 0 6px; border-color: #76b9ed; }
.current { background: #363636; border-color: #76b9ed; }
.tray { margin-left: auto; display: flex; align-items: center; font-size: 14px; }
.temp { width: 31px; margin-left: 7px; }
.sky { width: 110px; }
.net { margin-left: 8px; }
.cam { margin-left: 6px; }
.vol { margin-left: 8px; }
.lang { margin-left: 9px; width: 32px; font-size: 13px; }
.clock { display: flex; flex-direction: column; width: 60px; text-align: center; line-height: 18px; }
.clock time { font-size: 12px; }
.notif { position: relative; margin: 2px 13px 0 15px; }
.notif b { position: absolute; left: 8px; top: 9px; font-size: 11px; line-height: 16px; }
```
